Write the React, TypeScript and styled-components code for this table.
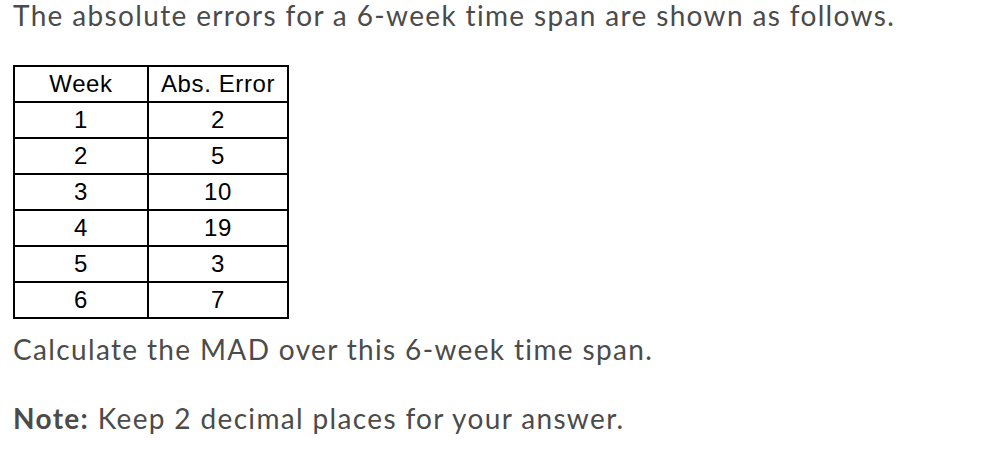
import { createGlobalStyle } from "styled-components";
import styled from "styled-components";

const GlobalStyle = createGlobalStyle`
  html, body {
    margin: 0;
    padding: 0;
    background: #ffffff;
  }
`;

const Page = styled.div`
  width: 1008px;
  height: 462px;
  box-sizing: border-box;
  padding: 0 0 0 13px;
  font-family: Lato, "Noto Sans", sans-serif;
  color: #4b4b4b;
  font-size: 28px;
  letter-spacing: 1.35px;
  font-variant-ligatures: none;
`;

const Paragraph = styled.p<{ $top: number }>`
  margin: ${(p) => p.$top}px 0 0;
  line-height: 30px;
  white-space: nowrap;
`;

const DataTable = styled.table`
  margin-top: 35px;
  border-collapse: collapse;
  font-family: "Liberation Sans", Arial, sans-serif;
  font-size: 24px;
  letter-spacing: 0.6px;
  color: #000;
`;

const Cell = styled.td<{ $width: number }>`
  width: ${(p) => p.$width}px;
  height: 36px;
  padding: 0;
  border: 2px solid #000;
  text-align: center;
  vertical-align: middle;
  box-sizing: border-box;
`;

const rows = [
  ["1", "2"],
  ["2", "5"],
  ["3", "10"],
  ["4", "19"],
  ["5", "3"],
  ["6", "7"],
];

export default function App() {
  return (
    <>
      <GlobalStyle />
      <Page>
        <Paragraph $top={0}>
          The absolute errors for a 6-week time span are shown as follows.
        </Paragraph>
        <DataTable>
          <tbody>
            <tr>
              <Cell $width={134}>Week</Cell>
              <Cell $width={140}>Abs. Error</Cell>
            </tr>
            {rows.map(([week, err]) => (
              <tr key={week}>
                <Cell $width={134}>{week}</Cell>
                <Cell $width={140}>{err}</Cell>
              </tr>
            ))}
          </tbody>
        </DataTable>
        <Paragraph $top={15}>
          Calculate the MAD over this 6-week time span.
        </Paragraph>
        <Paragraph $top={39}>
          <b>Note:</b> Keep 2 decimal places for your answer.
        </Paragraph>
      </Page>
    </>
  );
}
